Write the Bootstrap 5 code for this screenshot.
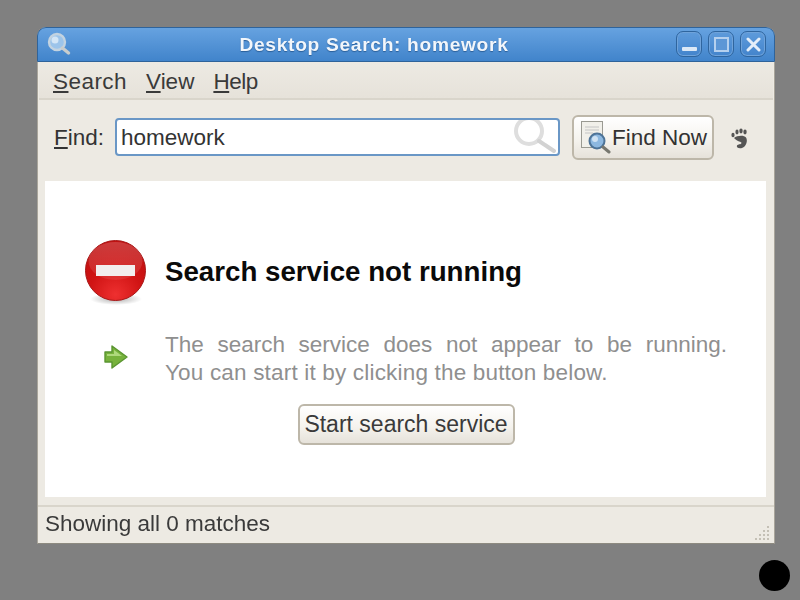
<!DOCTYPE html>
<html lang="en"><head><meta charset="utf-8"><title>Desktop Search</title>
<link href="https://cdn.jsdelivr.net/npm/bootstrap@5.3.0/dist/css/bootstrap.min.css" rel="stylesheet">
<style>
html,body{height:100%}
body{background:#808080;margin:0;font-family:"Liberation Sans",Arial,sans-serif;color:#333;font-size:22.5px;overflow:hidden}
.desk-win{position:absolute;left:37px;top:27px;width:738px;height:517px;background:#edeae3;border:1px solid #a9a59b;border-top:0;border-bottom-color:#8d8a80;border-radius:9px 9px 0 0;filter:blur(.45px)}
.win-title{height:35px;margin:0 -1px;padding:0 8px 0 9px;border:1px solid #2f639a;border-radius:9px 9px 0 0;background:linear-gradient(#66a2e0,#4184cb)}
.win-title-text{color:#f2f6fb;font-weight:700;font-size:19.200px;letter-spacing:.68px;text-shadow:0 1px 1px #2a5f99;left:0;right:64px;top:3px;text-align:center}
.win-btn{width:26px;height:26px;border:1px solid #2f659e;border-radius:7px;background:linear-gradient(#5e9bdb,#4384cc);box-shadow:inset 0 0 0 1px #6fa3da}
.win-btns{gap:6px}
.menu-row{height:38px;margin:0 1px;padding:3px 14px 0;gap:19px;border-bottom:2px solid #d9d5cb;background:linear-gradient(#edeae3,#e6e2da);color:#3a3a3a}
.menu-wide{letter-spacing:.45px}
.menu-tight{letter-spacing:-.45px}
.tool-row{height:81px;padding:0 0 6px 16px}
.find-label{width:61px;padding-top:1px}
.find-entry{width:445px;height:38px;padding:0 1px 0 4px;background:#fff;border:2px solid #6a97c6;border-radius:4px;color:#333}
.entry-text{padding-top:1px}
.gtk-btn{background:linear-gradient(#fff,#f5f3ee 55%,#e6e2da);border:2px solid #bdb7a9;border-radius:6px;color:#333;font-size:22.5px;line-height:1}
.find-btn{width:142px;height:45px;margin-left:12px;padding:0 0 0 6px}
.find-label-text{padding-top:1px;margin-left:-1px}
.foot-logo{margin-top:3px}
.content-pane{height:317px;margin:0 8px 0 7px;background:#fff;padding:58px 38px 0 39px}
.sign-col{width:81px}
.err-title{font-weight:700;font-size:27.700px;color:#0a0a0a;line-height:32px;margin-bottom:4px}
.err-text{width:562px;color:#8f8f8f;line-height:28px;font-size:22.5px}
.err-line-full{text-align:justify;text-align-last:justify}
.err-line-last{letter-spacing:.18px}
.err-text-row{margin-top:22px}
.arrow-mark{margin-bottom:4px}
.start-btn{width:217px;height:41px;margin:17px 0 0;padding:0;color:#3a3a3a;font-size:23px}
.status-row{margin:8px 0 0;height:38px;padding:0 6px 3px 7px;border-top:2px solid #d9d5cb;position:relative;color:#3a3a3a}
.grip{position:absolute;right:4px;bottom:2px}
.dot-mark{position:absolute;left:759px;top:560px;width:31px;height:31px;border-radius:50%;background:#000}
</style></head>
<body>
<div class="desk-win d-flex flex-column">
  <div class="win-title d-flex align-items-center justify-content-between position-relative">
    <svg width="24" height="24" viewBox="0 0 24 24" class="position-relative"><circle cx="10" cy="10" r="8" fill="#9cc4ea" stroke="#c3d3e0" stroke-width="2.4"/><circle cx="8" cy="8" r="3.500" fill="#d4e6f6"/><path d="M15.500 16l6 5" stroke="#c9cdcd" stroke-width="3.400" stroke-linecap="round"/></svg>
    <div class="win-title-text position-absolute">Desktop Search: homework</div>
    <div class="d-flex win-btns position-relative">
      <div class="win-btn d-flex align-items-end justify-content-center pb-1"><svg width="15" height="5"><rect width="15" height="4" rx="1" fill="#dbe8f6"/></svg></div>
      <div class="win-btn d-flex align-items-center justify-content-center"><svg width="15" height="15"><rect x="1" y="1" width="13" height="13" fill="#5d97d6" stroke="#b5d0ee" stroke-width="2"/></svg></div>
      <div class="win-btn d-flex align-items-center justify-content-center"><svg width="15" height="15"><path d="M2 2l11 11M13 2L2 13" stroke="#e4eef9" stroke-width="3" stroke-linecap="round"/></svg></div>
    </div>
  </div>
  <div class="menu-row d-flex align-items-center">
    <span class="menu-wide"><u>S</u>earch</span><span><u>V</u>iew</span><span class="menu-tight"><u>H</u>elp</span>
  </div>
  <div class="tool-row d-flex align-items-center">
    <div class="find-label"><u>F</u>ind:</div>
    <div class="find-entry d-flex justify-content-between align-items-start"><span class="entry-text">homework</span>
      <svg width="43" height="34" viewBox="0 0 43 34"><circle cx="15" cy="11" r="13" fill="none" stroke="#dedede" stroke-width="4"/><path d="M25 21l15 10" stroke="#d2d2d2" stroke-width="4" stroke-linecap="round"/></svg>
    </div>
    <button type="button" class="btn gtk-btn find-btn d-flex align-items-center">
      <svg width="33" height="34" viewBox="0 0 33 34" class="flex-shrink-0"><rect x="1.500" y="1.500" width="21" height="26" fill="#f1f0ea" stroke="#9a9a92"/><path d="M5 7h14M5 10h14M5 13h8" stroke="#c4c4c4" stroke-width="1"/><circle cx="17" cy="21" r="7.500" fill="#8db8e0" stroke="#4d7397" stroke-width="2"/><circle cx="15" cy="19" r="3" fill="#cfe2f3"/><path d="M23 27l6 5" stroke="#77776f" stroke-width="3" stroke-linecap="round"/></svg>
      <span class="find-label-text">Find Now</span>
    </button>
    <svg width="20" height="22" viewBox="0 0 20 22" class="ms-3 foot-logo"><g fill="#555"><ellipse cx="3" cy="7" rx="1.600" ry="2.200"/><ellipse cx="7" cy="4" rx="1.600" ry="2.400"/><ellipse cx="11" cy="3" rx="1.700" ry="2.400"/><ellipse cx="15" cy="4" rx="1.700" ry="2.400"/><path d="M4 10c3-2.500 10-3 12-.5 2 3 .5 9-4 10.500-3 1-6-.5-5-2.500 1-1.800 4-.5 4.500-2.500.3-1.500-4-1-7.500-5z"/></g></svg>
  </div>
  <div class="content-pane">
    <div class="d-flex align-items-center">
      <div class="sign-col flex-shrink-0">
        <svg width="66" height="70" viewBox="0 0 66 70" class="d-block">
          <defs><radialGradient id="rd" cx=".5" cy=".9" r=".8"><stop offset="0" stop-color="#ee3030"/><stop offset=".55" stop-color="#d01414"/><stop offset="1" stop-color="#c21010"/></radialGradient><radialGradient id="sh"><stop offset="0" stop-color="#000" stop-opacity=".32"/><stop offset="1" stop-color="#000" stop-opacity="0"/></radialGradient><linearGradient id="hi" x1="0" y1="0" x2="0" y2="1"><stop offset="0" stop-color="#fff" stop-opacity=".18"/><stop offset="1" stop-color="#fff" stop-opacity=".08"/></linearGradient></defs>
          <ellipse cx="32" cy="60" rx="26" ry="6" fill="url(#sh)"/>
          <circle cx="31.500" cy="31.500" r="30" fill="url(#rd)" stroke="#a81818" stroke-width="1"/>
          <ellipse cx="31.500" cy="22" rx="27" ry="19" fill="url(#hi)"/>
          <rect x="12" y="26" width="39" height="11" fill="#f2eeee"/>
        </svg>
      </div>
      <div class="err-title">Search service not running</div>
    </div>
    <div class="err-text-row d-flex align-items-center">
      <div class="sign-col flex-shrink-0 ps-3">
        <svg width="25" height="24" viewBox="0 0 25 24" class="d-block ms-1 arrow-mark"><path d="M1 7h7V1l15 11L8 23v-6H1z" fill="#77b23c" stroke="#5a9530" stroke-width="1.400" stroke-linejoin="round"/><path d="M3 9h7V5l8 6H3z" fill="#aed97c"/></svg>
      </div>
      <div class="err-text"><div class="err-line-full">The search service does not appear to be running.</div><div class="err-line-last">You can start it by clicking the button below.</div></div>
    </div>
    <div class="d-flex justify-content-center">
      <button type="button" class="btn gtk-btn start-btn">Start search service</button>
    </div>
  </div>
  <div class="status-row d-flex align-items-center">Showing all 0 matches
    <svg class="grip" width="16" height="16" viewBox="0 0 16 16"><g fill="#c4c0b5"><rect x="13" y="1" width="2" height="2"/><rect x="9" y="5" width="2" height="2"/><rect x="13" y="5" width="2" height="2"/><rect x="5" y="9" width="2" height="2"/><rect x="9" y="9" width="2" height="2"/><rect x="13" y="9" width="2" height="2"/><rect x="1" y="13" width="2" height="2"/><rect x="5" y="13" width="2" height="2"/><rect x="9" y="13" width="2" height="2"/><rect x="13" y="13" width="2" height="2"/></g></svg>
  </div>
</div>
<div class="dot-mark"></div>
<script src="https://cdn.jsdelivr.net/npm/bootstrap@5.3.0/dist/js/bootstrap.bundle.min.js"></script>
</body></html>
